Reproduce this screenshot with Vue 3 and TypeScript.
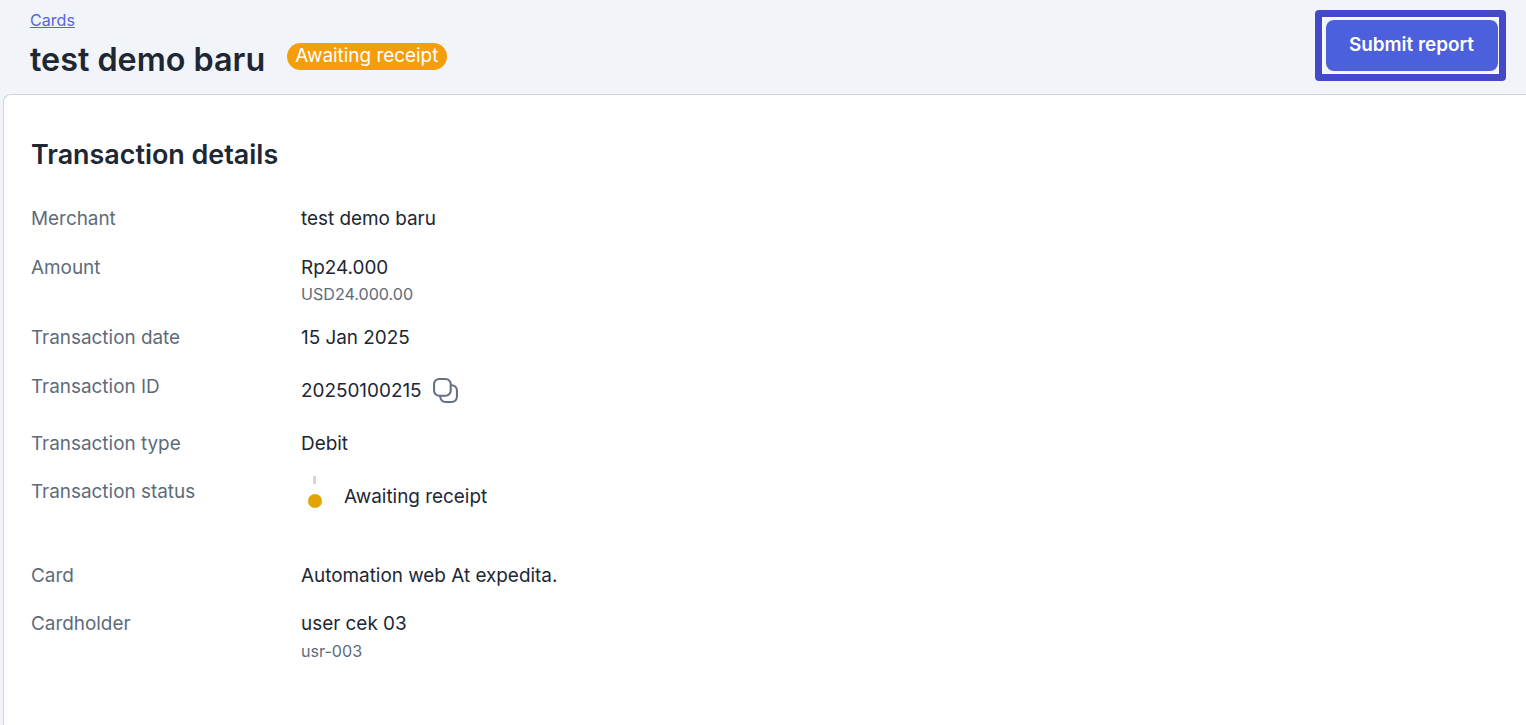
<script setup lang="ts">
interface DetailRow {
  label: string;
  value: string;
  sub?: string;
  kind?: "copy" | "status" | "type";
}

const rows: DetailRow[] = [
  { label: "Merchant", value: "test demo baru" },
  { label: "Amount", value: "Rp24.000", sub: "USD24.000.00" },
  { label: "Transaction date", value: "15 Jan 2025" },
  { label: "Transaction ID", value: "20250100215", kind: "copy" },
  { label: "Transaction type", value: "Debit", kind: "type" },
  { label: "Transaction status", value: "Awaiting receipt", kind: "status" },
  { label: "Card", value: "Automation web At expedita." },
  { label: "Cardholder", value: "user cek 03", sub: "usr-003" },
];
</script>

<template>
  <div class="page">
    <header class="page-header">
      <div class="page-header__left">
        <a class="page-header__crumb" href="#">Cards</a>
        <div class="page-header__title-row">
          <h1 class="page-header__title">test demo baru</h1>
          <span class="badge">Awaiting receipt</span>
        </div>
      </div>
      <div class="focus-frame">
        <button class="submit-btn" type="button">Submit report</button>
      </div>
    </header>

    <main class="card">
      <h2 class="card__title">Transaction details</h2>
      <dl class="details">
        <div
          v-for="row in rows"
          :key="row.label"
          class="details__row"
          :class="row.kind ? `details__row--${row.kind}` : ''"
        >
          <dt class="details__label">{{ row.label }}</dt>
          <dd class="details__value">
            <template v-if="row.kind === 'status'">
              <span class="timeline">
                <i class="timeline__line"></i>
                <i class="timeline__dot"></i>
              </span>
              <span class="timeline__text">{{ row.value }}</span>
            </template>
            <template v-else>
              <span>{{ row.value }}</span>
              <svg
                v-if="row.kind === 'copy'"
                class="copy-icon"
                viewBox="0 0 24 24"
                fill="none"
                stroke="#667085"
                stroke-width="2"
              >
                <rect x="1" y="1" width="16" height="16" rx="5" />
                <path d="M7 17.2v.8a5 5 0 0 0 5 5h6a5 5 0 0 0 5-5v-6a5 5 0 0 0-5-5h-1" />
              </svg>
            </template>
            <div v-if="row.sub" class="details__sub">{{ row.sub }}</div>
          </dd>
        </div>
      </dl>
    </main>
  </div>
</template>

<style>
html,
body {
  margin: 0;
  background: #f1f4f9;
}
</style>

<style scoped>
.page {
  min-height: 725px;
  box-sizing: border-box;
  padding-left: 3px;
  background: #f1f4f9;
  font-family: Inter, "Liberation Sans", sans-serif;
  color: #202734;
  overflow: hidden;
}

.page-header {
  height: 94px;
  box-sizing: border-box;
  display: flex;
  justify-content: space-between;
  align-items: flex-start;
  padding: 10px 20px 0 27px;
}

.page-header__crumb {
  display: block;
  font-size: 16.1px;
  line-height: 20px;
  color: #5a63e0;
}

.page-header__title-row {
  display: flex;
  align-items: flex-start;
  gap: 22px;
  margin-top: 9px;
}

.page-header__title {
  margin: 0;
  font-size: 32.3px;
  line-height: 42px;
  font-weight: 600;
}

.badge {
  margin-top: 4px;
  padding: 0 9px 0 8px;
  height: 27px;
  line-height: 26px;
  border-radius: 14px;
  background: #f59e0b;
  color: #fff;
  font-size: 18.9px;
}

.focus-frame {
  width: 191px;
  height: 71px;
  box-sizing: border-box;
  border: 7px solid #4449c9;
  border-radius: 4px;
  background: #f1f4f9;
  padding: 3px 1px 3px 4px;
  box-shadow: inset 0 0 0 2px #f8f9fd;
}

.submit-btn {
  display: block;
  width: 172px;
  height: 51px;
  padding: 0 1px 2px 0;
  border: 0;
  border-radius: 8px;
  background: #4c60de;
  color: #fff;
  font: 600 18.9px Inter, "Liberation Sans", sans-serif;
}

.card {
  min-height: 631px;
  box-sizing: border-box;
  background: #fff;
  border: 1px solid #d0d5dd;
  border-right: 0;
  border-bottom: 0;
  border-top-left-radius: 8px;
  padding: 41px 0 0 27px;
}

.card__title {
  margin: 0 0 33px;
  font-size: 26.9px;
  line-height: 36px;
  font-weight: 600;
}

.details {
  margin: 0;
  font-size: 18.9px;
  line-height: 27px;
}

.details__row {
  display: grid;
  grid-template-columns: 270px 1fr;
  margin-bottom: 21.5px;
}

.details__row--copy {
  margin-bottom: 26.5px;
}

.details__row--type {
  margin-bottom: 20.5px;
}

.details__row--copy .details__value {
  display: flex;
  align-items: center;
  gap: 11px;
  margin-top: 4px;
}

.details__row--status {
  margin-bottom: 52px;
}

.details__label {
  color: #5d6b7a;
}

.details__value {
  margin: 0;
}

.details__row--status .details__value {
  display: flex;
  align-items: flex-start;
  gap: 16px;
}

.details__sub {
  font-size: 16.1px;
  line-height: 20px;
  color: #5d6b7a;
  margin: 3.5px 0 -1.5px;
}

.copy-icon {
  width: 25px;
  height: 25px;
}

.timeline {
  width: 27px;
  margin-top: -2px;
  display: flex;
  flex-direction: column;
  align-items: center;
}

.timeline__line {
  width: 3px;
  height: 8px;
  background: #d0d5dd;
}

.timeline__dot {
  width: 14px;
  height: 14px;
  margin-top: 10px;
  border-radius: 50%;
  background: #e2a400;
}

.timeline__text {
  margin-top: 5px;
}
</style>
